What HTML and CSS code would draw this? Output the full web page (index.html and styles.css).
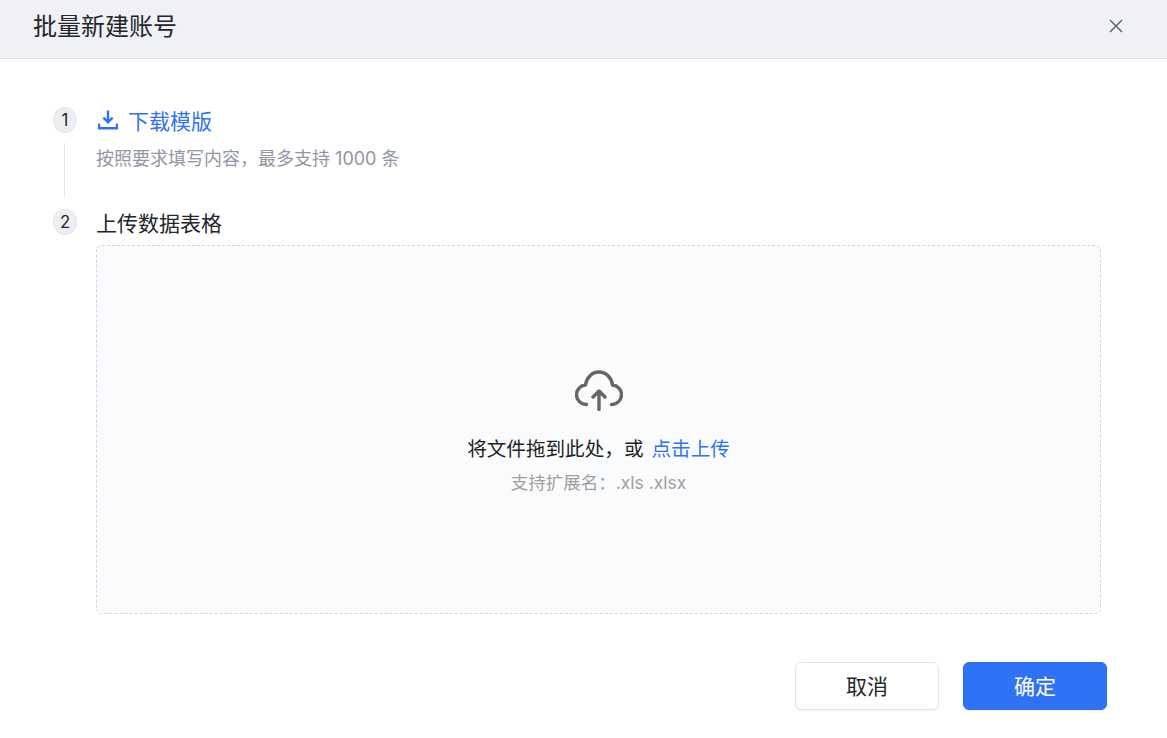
FILE: index.html
```html
<!DOCTYPE html>
<html lang="zh-CN">
<head>
    <meta charset="UTF-8">
    <meta name="viewport" content="width=device-width, initial-scale=1.0">
    <title>批量新建账号</title>
    <link rel="stylesheet" href="styles.css">
</head>
<body>
    <div class="dialog">
        <div class="dialog-header">
            <h1 class="dialog-title">批量新建账号</h1>
            <button class="close-btn" aria-label="关闭">
                <svg width="14" height="14" viewBox="0 0 14 14"><path d="M1 1L13 13M13 1L1 13" fill="none" stroke="#5f6672" stroke-width="1.5"/></svg>
            </button>
        </div>
        <div class="dialog-body">
            <div class="step step-first">
                <div class="step-side">
                    <span class="step-num">1</span>
                    <span class="step-line"></span>
                </div>
                <div class="step-main">
                    <a class="download-link" href="#">
                        <svg width="20" height="20" viewBox="0 0 20 20"><path d="M10 0.5V12M5.4 7.6L10 12.2L14.6 7.6M1 13.5V18.2H19V13.5" fill="none" stroke="#2f72f5" stroke-width="2.4"/></svg>
                        <span>下载模版</span>
                    </a>
                    <p class="step-desc">按照要求填写内容，最多支持 1000 条</p>
                </div>
            </div>
            <div class="step">
                <div class="step-side">
                    <span class="step-num">2</span>
                </div>
                <div class="step-main">
                    <div class="step-title">上传数据表格</div>
                    <div class="dropzone">
                        <svg class="cloud" width="48" height="41" viewBox="0 0 48 41"><path d="M11.5 34.5C6 34.5 1.5 30 1.5 24.8C1.5 19.5 5.5 15.4 10.5 15C11.5 7.6 17 2 24 2C31 2 36.5 7.6 37.5 15C42.5 15.4 46.5 19.5 46.5 24.8C46.5 30 42 34.5 36.5 34.5M24 39.5V21.5M18 27L24 21L30 27" fill="none" stroke="#666" stroke-width="3.4" stroke-linecap="round" stroke-linejoin="round"/></svg>
                        <div class="drop-text">将文件拖到此处，或<a class="drop-link" href="#">点击上传</a></div>
                        <div class="drop-hint">支持扩展名：.xls .xlsx</div>
                    </div>
                </div>
            </div>
        </div>
        <div class="dialog-footer">
            <button class="btn">取消</button>
            <button class="btn btn-primary">确定</button>
        </div>
    </div>
</body>
</html>
```

FILE: styles.css
```css
* {
    box-sizing: border-box;
}
body {
    margin: 0;
    background-color: #fff;
    color: #23262c;
    font-family: Inter, "Noto Sans CJK SC", sans-serif;
}
.dialog {
    width: 1167px;
    height: 738px;
    overflow: hidden;
}
.dialog-header {
    height: 59px;
    padding: 0 44px 9px 33px;
    display: flex;
    align-items: center;
    justify-content: space-between;
    background-color: #f0f1f5;
    border-bottom: 1px solid #e2e4e9;
}
.dialog-title {
    margin: 0;
    font-size: 24px;
    font-weight: 400;
}
.close-btn {
    margin-top: 2px;
    padding: 0;
    border: none;
    background: none;
    display: flex;
}
.dialog-body {
    padding: 48px 66px 0 53px;
}
.step {
    display: flex;
}
.step-first {
    height: 102px;
}
.step-side {
    width: 24px;
    margin-right: 19px;
    display: flex;
    flex-direction: column;
    align-items: center;
}
.step-num {
    width: 24px;
    height: 26px;
    border-radius: 50%;
    background-color: #eceef2;
    border: 1px solid #e4e6eb;
    font-size: 16.8px;
    line-height: 24px;
    text-align: center;
}
.step-line {
    width: 1px;
    height: 54px;
    margin-top: 10px;
    margin-right: 1px;
    background-color: #e2e4e9;
}
.step-main {
    flex: 1;
    min-width: 0;
}
.download-link {
    height: 30px;
    margin-top: -2px;
    padding-left: 2px;
    display: flex;
    align-items: center;
    gap: 10px;
    color: #2f72f5;
    font-size: 21px;
    text-decoration: none;
}
.step-desc {
    margin: 11px 0 0;
    color: #9096a3;
    font-size: 18px;
    line-height: 26px;
}
.step-title {
    height: 36px;
    font-size: 21px;
    line-height: 30px;
}
.dropzone {
    width: 1005px;
    height: 369px;
    padding-top: 124px;
    display: flex;
    flex-direction: column;
    align-items: center;
    background-color: #fafbfd;
    border: 1px dashed #d3d6db;
    border-radius: 6px;
}
.cloud {
    flex: none;
}
.drop-text {
    margin-top: 24px;
    color: #1f1f1f;
    font-size: 19.6px;
    line-height: 28px;
}
.drop-link {
    margin-left: 8px;
    color: #2f72f5;
    text-decoration: none;
}
.drop-hint {
    margin-top: 8px;
    color: #a0a0a0;
    font-size: 17.5px;
    line-height: 24px;
}
.dialog-footer {
    margin-top: 48px;
    padding-right: 60px;
    display: flex;
    justify-content: flex-end;
    gap: 24px;
}
.btn {
    width: 144px;
    height: 48px;
    padding: 0 0 2px;
    background-color: #fff;
    color: #23262c;
    border: 1px solid #e2e4e9;
    border-radius: 6px;
    box-shadow: 0 1px 2px rgba(0, 0, 0, 0.05);
    font-family: inherit;
    font-size: 21px;
}
.btn-primary {
    background-color: #2f72f5;
    border-color: #2f6ae8;
    color: #fff;
}
```
